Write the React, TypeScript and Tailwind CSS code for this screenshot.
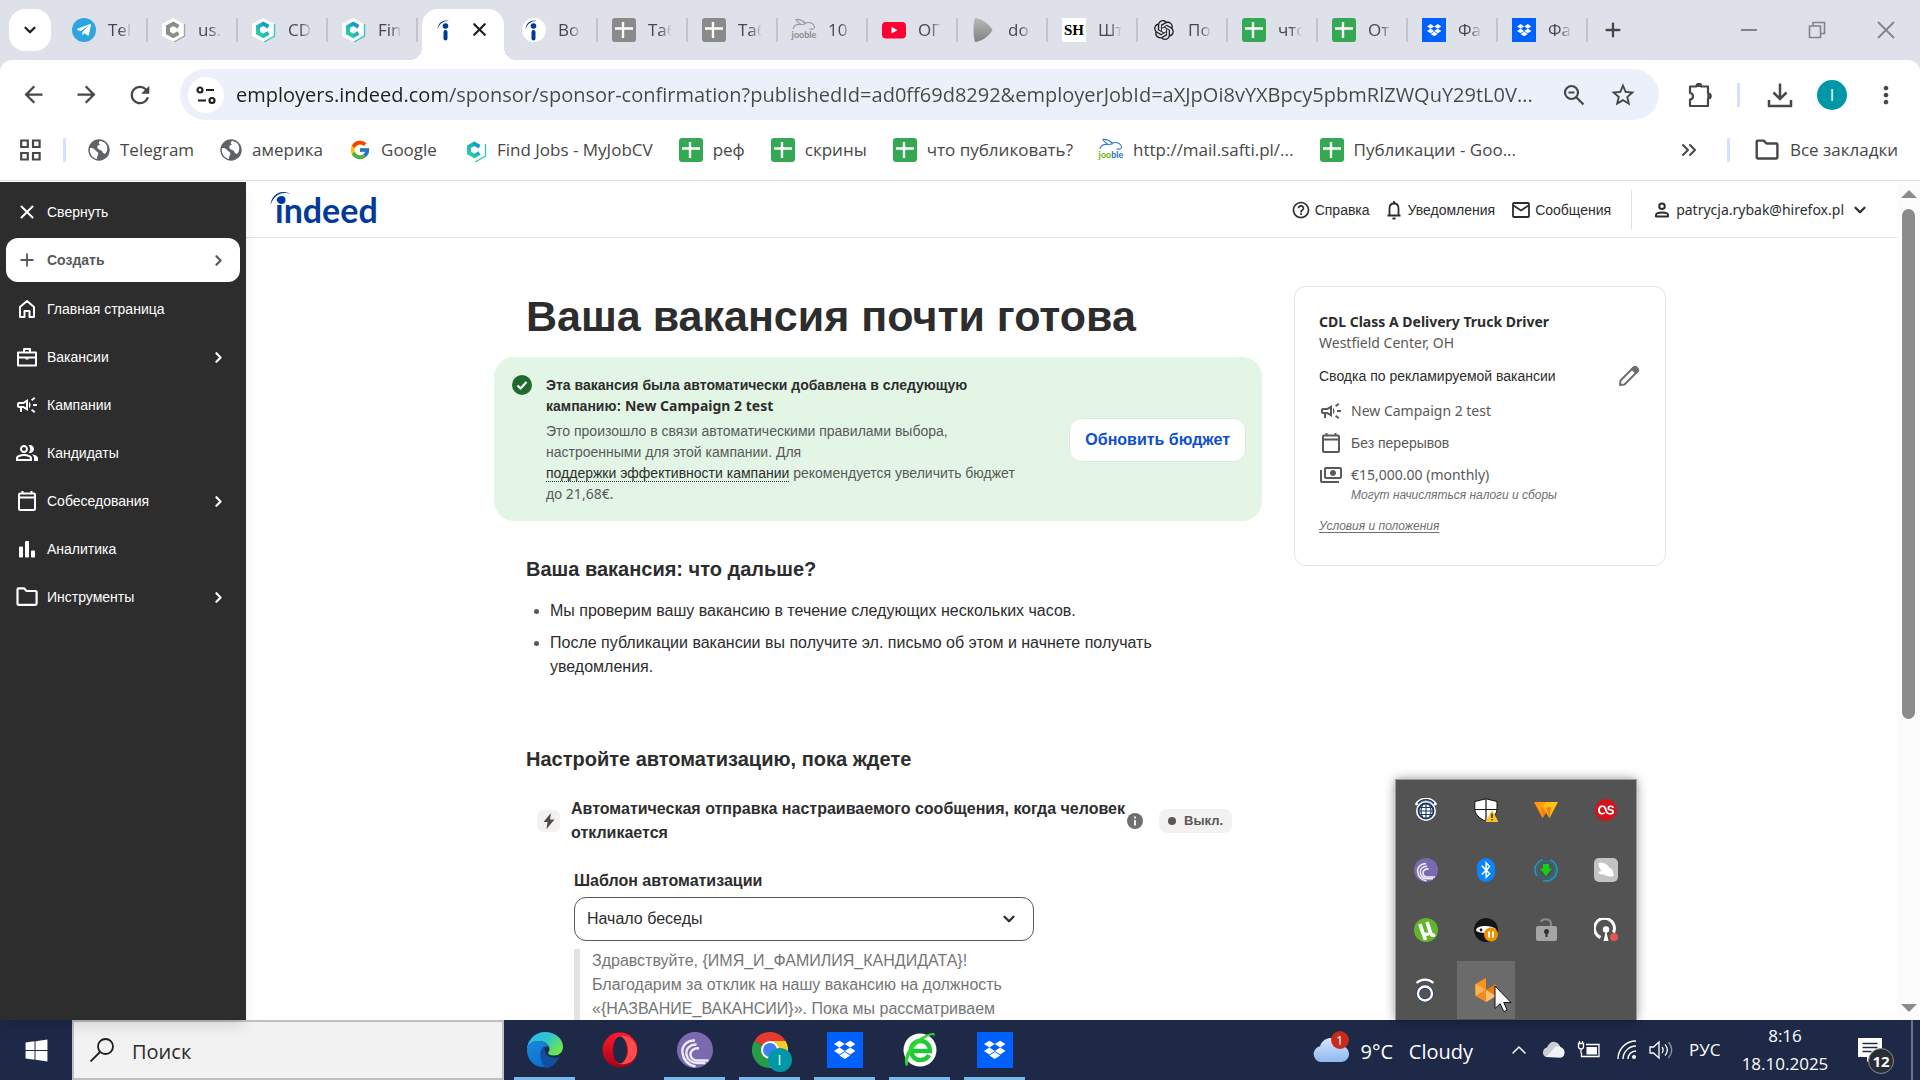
import React from 'react';
import { FcGoogle } from 'react-icons/fc';
import { FaDropbox, FaTelegramPlane, FaWindows, FaLastfm, FaBluetoothB } from 'react-icons/fa';
import { RiOpenaiFill } from 'react-icons/ri';
import {
    MdArrowBack,
    MdArrowForward,
    MdRefresh,
    MdStarBorder,
    MdMoreVert,
    MdOutlineHelpOutline,
    MdOutlineCampaign,
    MdOutlinePeopleAlt,
    MdOutlinePayments,
} from 'react-icons/md';
import { ChevronDown, ChevronRight, ChevronUp, ChevronsRight, Plus, X } from 'lucide-react';

interface IconProps {
    className?: string;
}

const SheetsIcon = ({ className = 'text-[#34a853]' }: IconProps) => (
    <svg viewBox="0 0 24 24" className={`size-6 shrink-0 ${className}`}>
        <rect width="24" height="24" rx="3" fill="currentColor" />
        <path d="M3 10.5h18M11 4v16" stroke="#fff" strokeWidth="2.4" fill="none" />
    </svg>
);

const HexIcon = ({ gray = false, plate = true }: { gray?: boolean; plate?: boolean }) => (
    <svg viewBox="0 0 24 24" className="size-6 shrink-0">
        <defs>
            <linearGradient id={gray ? 'hexGray' : 'hexTeal'} x1="0" y1="1" x2="1" y2="0">
                <stop offset="0" stopColor={gray ? '#8c8c8c' : '#2fd3a0'} />
                <stop offset="1" stopColor={gray ? '#8c8c8c' : '#128fd8'} />
            </linearGradient>
        </defs>
        {plate && <path d="M11 0l11 6v12l-10 6-12-6V6z" fill="#fff" />}
        <path
            d="M16.5 8.7L11.300 5.700 6 8.700v6.300l5.300 3 5.200-3"
            fill="none"
            stroke={gray ? 'url(#hexGray)' : 'url(#hexTeal)'}
            strokeWidth="4"
        />
        <path d="M22.500 6v12L12 24" fill="none" stroke={gray ? '#a5a5a5' : '#3ac6c0'} strokeWidth="1.400" />
    </svg>
);

const TelegramIcon = () => (
    <span className="flex size-6 shrink-0 items-center justify-center rounded-full bg-[#2ca5e0] text-white">
        <FaTelegramPlane className="mr-px size-4" />
    </span>
);

const IndeedIcon = ({ className = '' }: IconProps) => (
    <svg viewBox="0 0 24 24" className={`size-6 shrink-0 ${className}`}>
        <path d="M3.500 11C4 5 9 .5 16.500 3.500 10.500 2 6 5 3.500 11z" fill="#003a9b" />
        <circle cx="11.500" cy="8" r="2.800" fill="#003a9b" />
        <rect x="9.500" y="12" width="4" height="10.500" rx="2" fill="#003a9b" />
    </svg>
);

const JoobleIcon = ({ gray = false }: { gray?: boolean }) => (
    <span className="flex size-6 shrink-0 flex-col items-center">
        <svg viewBox="0 0 24 12" className="h-3 w-6 shrink-0">
            <path
                d="M1 11c1-4 4-5 8-4.500C7 5 5 4 4 1.500 8 1 11 3 13 5c4-1 8 0 9.500 3.500.5 2-2 3-5 2.500M9 6.500c2 0 4-.5 5-1"
                fill="none"
                stroke={gray ? '#9a9a9a' : '#2f7fc8'}
                strokeWidth="1.100"
            />
        </svg>
        <span className={`font-['Lato',sans-serif] text-[9px] leading-[10px] font-bold ${gray ? 'text-[#8c8c8c]' : 'text-[#1b6fc0]'}`}>
            <span className={gray ? '' : 'text-[#6bb400]'}>joo</span>ble
        </span>
    </span>
);

const YoutubeIcon = () => (
    <svg viewBox="0 0 24 24" className="size-6 shrink-0">
        <rect y="4" width="24" height="16.500" rx="4" fill="#ff0033" />
        <path d="M9.500 8.800l6 3.400-6 3.400z" fill="#fff" />
    </svg>
);

const PlayIcon = () => (
    <svg viewBox="0 0 24 24" className="size-6 shrink-0">
        <defs>
            <linearGradient id="play" x1="0" y1="0" x2="0" y2="1">
                <stop offset="0" stopColor="#b8b8b8" />
                <stop offset="1" stopColor="#828282" />
            </linearGradient>
        </defs>
        <path d="M3 0c5 0 14 5 17.500 12C17 19 8 24 3 24c-2-6-2-18 0-24z" fill="url(#play)" />
    </svg>
);

const DropboxIcon = ({ className = 'size-6' }: IconProps) => (
    <span className={`flex shrink-0 items-center justify-center bg-[#0061fe] text-white ${className}`}>
        <FaDropbox className="size-3/5" />
    </span>
);

const GlobeIcon = () => (
    <svg viewBox="0 0 22 22" className="size-[22px] shrink-0">
        <circle cx="11" cy="11" r="10.700" fill="#5f6368" />
        <path d="M12 2c-2 1-1 3 0 4-3 0-3 2-2 4 2 1 4 1 5 4l2 1c3-3 3-8 0-11-1-1-3-2-5-2zM2 9c3-.5 5 1 6 3 2 1 3 2 2 4-1 1-1 3-1 4C4 19 1 14 2 9z" fill="#fff" />
    </svg>
);

const FolderIcon = ({ className = 'size-6' }: IconProps) => (
    <svg viewBox="0 0 24 24" className={`shrink-0 ${className}`} fill="none" stroke="currentColor" strokeWidth="2.200" strokeLinejoin="round">
        <path d="M2.500 18.500v-14q0-1.200 1.200-1.200H9l2.600 2.700h9q1 0 1 1v11.500q0 1.300-1.200 1.300H3.700q-1.200 0-1.200-1.300z" />
    </svg>
);

const HomeIcon = () => (
    <svg viewBox="0 0 20 20" className="size-5" fill="none" stroke="currentColor" strokeWidth="2" strokeLinejoin="round">
        <path d="M3 18V8l7-6 7 6v10h-4.500v-6h-5v6z" />
    </svg>
);

const BriefcaseIcon = () => (
    <svg viewBox="0 0 22 20" className="h-5 w-[22px]" fill="none" stroke="currentColor" strokeWidth="2">
        <path d="M2 5.500h18v13H2zM8 5V2h6v3M2 10.500h18" strokeLinejoin="round" />
        <path d="M9.500 10.500h3v2h-3z" fill="currentColor" stroke="none" />
    </svg>
);

const CalendarIcon = () => (
    <svg viewBox="0 0 20 22" className="h-[22px] w-5" fill="none" stroke="currentColor" strokeWidth="2">
        <rect x="2" y="3.500" width="16" height="16.500" rx="1" />
        <path d="M2 7.500h16M5.500 1v3M14.500 1v3" />
    </svg>
);

const BarsIcon = () => (
    <svg viewBox="0 0 18 18" className="size-[18px]" fill="currentColor">
        <rect x="1" y="6.500" width="4" height="11" rx="1" />
        <rect x="7" y="1" width="4" height="16.500" rx="1" />
        <rect x="13" y="10.500" width="4" height="7" rx="1" />
    </svg>
);

const BellIcon = () => (
    <svg viewBox="0 0 14 20" className="h-5 w-[14px]" fill="none" stroke="currentColor" strokeWidth="1.800">
        <path d="M.5 15.500h13M2.500 15V8.500C2.500 5.500 4.300 3.500 7 3.500s4.500 2 4.500 5V15" />
        <path d="M7 1v2M5.500 18.500h3" />
    </svg>
);

const MailIcon = () => (
    <svg viewBox="0 0 18 16" className="h-4 w-[18px]" fill="none" stroke="currentColor" strokeWidth="1.800">
        <rect x="1" y="1" width="16" height="14" rx="1" />
        <path d="M1.500 3.500L9 8.500l7.500-5" />
    </svg>
);

const PersonIcon = () => (
    <svg viewBox="0 0 14 16" className="h-4 w-[14px]" fill="none" stroke="currentColor" strokeWidth="2">
        <circle cx="7" cy="4.200" r="2.800" />
        <path d="M1 14.500v-1.500c0-1.500 3-2.500 6-2.500s6 1 6 2.500v1.500z" strokeLinejoin="round" />
    </svg>
);

const BittorrentIcon = ({ className = 'size-6' }: IconProps) => (
    <svg viewBox="0 0 36 36" className={`shrink-0 ${className}`}>
        <circle cx="18" cy="18" r="18" fill="#7a6ab0" />
        <g fill="none" stroke="#eeeaf6" strokeWidth="2.400">
            <path d="M18 8.500C10 8 4.500 14 5.500 21c1 7 6 12 13 13.500" />
            <path d="M19.500 12.500c-6-.5-11 4-10 10 .8 5 5 8.500 11 8.500h8" />
            <path d="M22 16.500c-4.500-1-9 2-8.500 6.500.4 3 3 5.500 7 5.500h11" />
        </g>
    </svg>
);

const EdgeIcon = () => (
    <svg viewBox="0 0 36 36" className="size-9">
        <defs>
            <linearGradient id="edgeTop" x1="0" y1="0" x2="1" y2="0.600">
                <stop offset="0" stopColor="#33b5f0" />
                <stop offset="0.500" stopColor="#2cc4d4" />
                <stop offset="1" stopColor="#6ae84a" />
            </linearGradient>
            <linearGradient id="edgeLow" x1="0" y1="0" x2="0.600" y2="1">
                <stop offset="0" stopColor="#1a8ad8" />
                <stop offset="1" stopColor="#0c6fd0" />
            </linearGradient>
        </defs>
        <path d="M0 18C0 8 8 0 18 0c11 0 18 7 18 15 0 5-4 8.500-9 8.500-4 0-6-1.500-6-2.500 0-.8 1.500-1.500 1.500-4C22.500 13 18 9 12 9 6 9 1 12 0 18z" fill="url(#edgeTop)" />
        <path d="M0 18c0-6 5-9 11-9 5 0 10 2.500 11 6-2-1-5-.5-7 2.500-3 5-1 13 5 17.500C8 37 0 28 0 18z" fill="url(#edgeLow)" />
        <path d="M13.500 21c0-3 2-6 4.500-7-1 3 0 8 4 10.500 3.500 2 7.500 1.800 10.500.2C30 31 25 35.500 19 36c-3-2-6-9-5.500-15z" fill="#114f9f" />
    </svg>
);

const OperaIcon = () => (
    <svg viewBox="0 0 36 36" className="size-9">
        <defs>
            <linearGradient id="opera" x1="0" y1="0" x2="0" y2="1">
                <stop offset="0" stopColor="#ff1b2d" />
                <stop offset="1" stopColor="#a70014" />
            </linearGradient>
        </defs>
        <ellipse cx="18" cy="18" rx="17.500" ry="17.500" fill="url(#opera)" />
        <path d="M13 6c9-6 22 0 22 12s-13 18-22 12c9 3 13-5 13-12S22 3 13 6z" fill="#ff4b4b" />
        <ellipse cx="18" cy="18" rx="7" ry="13.500" fill="#1e2847" />
    </svg>
);

const ChromeIcon = () => (
    <span className="relative block size-9">
        <svg viewBox="0 0 36 36" className="size-9">
            <path d="M18 18L2.400 9A18 18 0 0 1 33.600 9z" fill="#e33b2e" />
            <path d="M18 18L2.400 9A18 18 0 0 0 18 36z" fill="#269e48" />
            <path d="M18 18L18 36A18 18 0 0 0 33.600 9H18z" fill="#fcc72b" />
            <circle cx="18" cy="18" r="9" fill="#fff" />
            <circle cx="18" cy="18" r="7" fill="#3f7ff0" />
        </svg>
        <span className="absolute -right-1 -bottom-1 flex size-6 items-center justify-center rounded-full bg-[#0097a7] font-['Open_Sans',sans-serif] text-sm text-white">
            I
        </span>
    </span>
);

const GreenBrowserIcon = () => (
    <svg viewBox="0 0 36 36" className="size-9">
        <circle cx="18" cy="18" r="16.500" fill="#fff" />
        <path d="M10 19h18c0-6-4-10-9.500-10S9 13 9 18.500 13 28 18.500 28c4 0 7-2 8.500-5" fill="none" stroke="#1fc93a" strokeWidth="4.500" />
        <path d="M4 34C-1 24 12 4 31 1c2 0 2 2 1 4 0-3-3-2-7 0C12 12 5 24 6 33z" fill="#2bdb2b" />
    </svg>
);

const tabs = [
    { icon: <TelegramIcon />, text: 'Tel' },
    { icon: <HexIcon gray />, text: 'us.' },
    { icon: <HexIcon />, text: 'CD' },
    { icon: <HexIcon />, text: 'Fin' },
    { icon: <IndeedIcon />, text: '', active: true },
    { icon: <IndeedIcon className="rounded-full bg-white" />, text: 'Во' },
    { icon: <SheetsIcon className="text-[#8a8a8a]" />, text: 'Таб' },
    { icon: <SheetsIcon className="text-[#8a8a8a]" />, text: 'Таб' },
    { icon: <JoobleIcon gray />, text: '10' },
    { icon: <YoutubeIcon />, text: 'ОГ' },
    { icon: <PlayIcon />, text: 'do' },
    {
        icon: (
            <span className="flex size-6 shrink-0 items-center justify-center bg-white font-['Liberation_Serif',serif] text-[15px] font-bold text-black">
                SH
            </span>
        ),
        text: 'Шт',
    },
    { icon: <RiOpenaiFill className="size-6 shrink-0 text-[#1f1f1f]" />, text: 'По' },
    { icon: <SheetsIcon />, text: 'что' },
    { icon: <SheetsIcon />, text: 'От' },
    { icon: <DropboxIcon />, text: 'Фа' },
    { icon: <DropboxIcon />, text: 'Фа' },
];

const bookmarks = [
    { icon: <GlobeIcon />, text: 'Telegram' },
    { icon: <GlobeIcon />, text: 'америка' },
    { icon: <FcGoogle className="size-[22px] shrink-0" />, text: 'Google' },
    { icon: <HexIcon plate={false} />, text: 'Find Jobs - MyJobCV' },
    { icon: <SheetsIcon />, text: 'реф' },
    { icon: <SheetsIcon />, text: 'скрины' },
    { icon: <SheetsIcon />, text: 'что публиковать?' },
    { icon: <JoobleIcon />, text: 'http://mail.safti.pl/...' },
    { icon: <SheetsIcon />, text: 'Публикации - Goo...' },
];

const menu = [
    { icon: <HomeIcon />, text: 'Главная страница' },
    { icon: <BriefcaseIcon />, text: 'Вакансии', more: true },
    { icon: <MdOutlineCampaign className="size-6" />, text: 'Кампании' },
    { icon: <MdOutlinePeopleAlt className="size-6" />, text: 'Кандидаты' },
    { icon: <CalendarIcon />, text: 'Собеседования', more: true },
    { icon: <BarsIcon />, text: 'Аналитика' },
    { icon: <FolderIcon />, text: 'Инструменты', more: true },
];

const Latin = ({ children }: { children: React.ReactNode }) => (
    <span className="font-['Noto_Sans',sans-serif] leading-none">{children}</span>
);

const TabStrip = () => (
    <div className="flex h-[60px] items-center bg-[#dee1e9] pl-[9px] text-[#474747]">
        <button aria-label="Поиск вкладок" className="mr-[7px] flex size-[42px] shrink-0 items-center justify-center rounded-2xl bg-white text-[#1f1f1f]">
            <ChevronDown size={18} strokeWidth={3} />
        </button>
        {tabs.map((tab, i) =>
            tab.active ? (
                <div key={i} className="relative mt-[9px] flex h-[51px] w-[90px] shrink-0 items-start px-1">
                    <div className="flex h-full w-full items-start justify-between rounded-t-2xl bg-white pt-[9px] pr-[14px] pl-3">
                        {tab.icon}
                        <button aria-label="Закрыть" className="mt-px text-[#1f1f1f]">
                            <X size={21} strokeWidth={2.5} />
                        </button>
                    </div>
                    <span className="absolute bottom-0 -left-2 size-3 bg-[radial-gradient(circle_at_top_left,transparent_12px,white_12px)]" />
                    <span className="absolute -right-2 bottom-0 size-3 bg-[radial-gradient(circle_at_top_right,transparent_12px,white_12px)]" />
                </div>
            ) : (
                <div key={i} className="flex w-[90px] shrink-0 items-center gap-3 pl-[14px]">
                    {tab.icon}
                    <span className="w-6 overflow-hidden text-[17px] leading-6 whitespace-nowrap [mask-image:linear-gradient(to_right,black_50%,transparent)]">
                        {tab.text}
                    </span>
                    <span className="ml-auto h-6 w-[2px] bg-[#c4c4c4]" />
                </div>
            ),
        )}
        <button aria-label="Новая вкладка" className="ml-[14px]">
            <Plus size={22} strokeWidth={2.5} />
        </button>
        <div className="mr-[25px] ml-auto flex items-center gap-[51px] text-[#808389]">
            <button aria-label="Свернуть окно" className="h-[2px] w-4 bg-current" />
            <button aria-label="Восстановить">
                <svg viewBox="0 0 18 18" className="size-[18px]" fill="none" stroke="currentColor" strokeWidth="1.600">
                    <path d="M1.500 5h11v11.500h-11zM5 5V1.500h11.500v11H12.500" />
                </svg>
            </button>
            <button aria-label="Закрыть окно">
                <svg viewBox="0 0 18 18" className="size-[18px]" fill="none" stroke="currentColor" strokeWidth="1.800">
                    <path d="M1 1l16 16M17 1L1 17" />
                </svg>
            </button>
        </div>
    </div>
);

const Toolbar = () => (
    <div className="rounded-t-xl bg-white text-[#474747]">
        <div className="flex items-center pt-[9px] pr-5 pl-5">
            <div className="flex w-[160px] items-center gap-[26px]">
                <button aria-label="Назад"><MdArrowBack size={27} /></button>
                <button aria-label="Вперед"><MdArrowForward size={27} /></button>
                <button aria-label="Обновить"><MdRefresh size={28} /></button>
            </div>
            <div className="flex h-[51px] min-w-0 flex-1 items-center rounded-full bg-[#ecf0fa] pr-[22px] pl-2">
                <span className="flex size-9 shrink-0 items-center justify-center rounded-full bg-white">
                    <svg viewBox="0 0 20 20" className="size-5" fill="none" stroke="#1f1f1f" strokeWidth="2.200">
                        <circle cx="4" cy="5" r="2.500" />
                        <path d="M10 5h8M2 15.500h8" />
                        <circle cx="16" cy="15.500" r="2.500" />
                    </svg>
                </span>
                <input
                    aria-label="Адрес"
                    readOnly
                    className="ml-3 min-w-0 flex-1 bg-[linear-gradient(to_right,#1f1f1f_207px,#474747_207px)] bg-clip-text text-xl text-transparent outline-none"
                    value="employers.indeed.com/sponsor/sponsor-confirmation?publishedId=ad0ff69d8292&employerJobId=aXJpOi8vYXBpcy5pbmRlZWQuY29tL0V..."
                />
                <button aria-label="Масштаб" className="mr-6 ml-3">
                    <svg viewBox="0 0 22 22" className="size-[22px]" fill="none" stroke="currentColor" strokeWidth="2.200">
                        <circle cx="8.500" cy="8.500" r="6.500" />
                        <path d="M13.500 13.500l7 7M5.500 8.500h6" />
                    </svg>
                </button>
                <button aria-label="Добавить закладку"><MdStarBorder size={28} /></button>
            </div>
            <div className="ml-7 flex items-center">
                <button aria-label="Расширения">
                    <svg viewBox="0 0 26 26" className="size-[26px]" fill="none" stroke="currentColor" strokeWidth="2.200" strokeLinejoin="round">
                        <path d="M3 4.500h6.500a2.300 2.300 0 0 1 4.600 0H21v7a2.500 2.500 0 0 1 0 5V24H3v-6.500c4-.5 4-6 0-6.500z" />
                        <path d="M10 4a2 2 0 0 1 4 0zM21.500 12a2 2 0 0 1 0 4z" fill="currentColor" />
                    </svg>
                </button>
                <span className="ml-6 h-6 w-[3px] bg-[#d3e3fd]" />
                <button aria-label="Загрузки" className="ml-[27px]">
                    <svg viewBox="0 0 26 26" className="size-[26px]" fill="none" stroke="currentColor" strokeWidth="2.500">
                        <path d="M13 1.500v15M6.500 10.500l6.500 6.500 6.500-6.500M2 18v6h22v-6" />
                    </svg>
                </button>
                <button className="ml-6 flex size-[30px] items-center justify-center rounded-full bg-[#0097a7] text-base text-white">I</button>
                <button aria-label="Меню" className="ml-[25px]"><MdMoreVert size={28} /></button>
            </div>
        </div>
        <div className="flex h-[60px] items-center pr-[22px] pl-5 text-[17px]">
            <button aria-label="Приложения">
                <svg viewBox="0 0 21 22" className="h-[22px] w-[21px]" fill="none" stroke="currentColor" strokeWidth="2.200">
                    <path d="M1.200 1.500h6.600v6.500H1.200zM13 1.500h6.600v6.500H13zM1.200 14h6.600v6.500H1.200zM13 14h6.600v6.500H13z" />
                </svg>
            </button>
            <span className="mx-[22px] h-6 w-[3px] bg-[#d3e3fd]" />
            <div className="flex items-center gap-[26px]">
                {bookmarks.map((item) => (
                    <a key={item.text} href="#" className="flex items-center gap-[10px] whitespace-nowrap">
                        {item.icon}
                        {item.text}
                    </a>
                ))}
            </div>
            <button aria-label="Другие закладки" className="mr-[2px] ml-auto"><ChevronsRight size={24} /></button>
            <span className="mx-6 h-6 w-[3px] bg-[#d3e3fd]" />
            <a href="#" className="flex items-center gap-[10px] whitespace-nowrap">
                <FolderIcon className="size-[26px]" />
                Все закладки
            </a>
        </div>
    </div>
);

const Sidebar = () => (
    <nav className="z-10 w-[246px] shrink-0 bg-[#2d2d2d] px-[6px] text-sm text-white shadow-lg">
        <button className="mt-1 flex h-[52px] items-center">
            <span className="flex w-[41px] justify-center"><X size={22} strokeWidth={2.2} /></span>
            Свернуть
        </button>
        <button className="mb-[3px] flex h-11 w-full items-center rounded-xl bg-white pr-[13px] font-bold text-[#595959]">
            <span className="flex w-[41px] justify-center"><Plus size={20} strokeWidth={2.2} /></span>
            Создать
            <ChevronRight className="ml-auto" size={17} strokeWidth={3} />
        </button>
        {menu.map((item) => (
            <a key={item.text} href="#" className="flex h-12 items-center pr-[13px]">
                <span className="flex w-[41px] justify-center">{item.icon}</span>
                {item.text}
                {item.more && <ChevronRight className="ml-auto" size={17} strokeWidth={3} />}
            </a>
        ))}
    </nav>
);

const PageHeader = () => (
    <header className="flex h-14 shrink-0 items-center border-b border-[#e4e2e0] pr-7 pl-6 text-sm text-[#2d2d2d]">
        <a href="#" className="relative flex h-10 items-center pl-[5px] font-['Lato',sans-serif] text-[34px] leading-10 font-bold text-[#003a9b]">
            <svg viewBox="0 0 22 18" className="absolute top-0 left-0 h-[18px] w-[22px]">
                <path d="M.5 15C1.500 5 10-1.500 20.500 4 11 1 4 5.500 .5 15z" fill="#003a9b" />
                <circle cx="11.500" cy="10" r="4" fill="#003a9b" />
            </svg>
            indeed
        </a>
        <div className="ml-auto flex items-center gap-[17px]">
            <a href="#" className="flex items-center gap-1"><MdOutlineHelpOutline size={20} />Справка</a>
            <a href="#" className="flex items-center gap-[7px]"><BellIcon />Уведомления</a>
            <a href="#" className="flex items-center gap-[5px]"><MailIcon />Сообщения</a>
        </div>
        <button className="ml-5 flex h-10 items-center gap-[7px] border-l border-[#e4e2e0] pl-[23px] font-['Noto_Sans',sans-serif]">
            <PersonIcon />
            patrycja.rybak@hirefox.pl
            <ChevronDown size={18} strokeWidth={3} />
        </button>
    </header>
);

const CampaignNotice = () => (
    <section className="flex items-center rounded-[20px] bg-[#e3f6e6] pt-[18px] pr-4 pb-4 pl-[18px] text-sm leading-[21px] text-[#595959]">
        <div className="flex flex-1 gap-[14px]">
            <svg viewBox="0 0 20 20" className="size-5 shrink-0">
                <circle cx="10" cy="10" r="10" fill="#1f6a2e" />
                <path d="M5.500 10.500l3 3 6-6.500" fill="none" stroke="#fff" strokeWidth="2" />
            </svg>
            <div className="max-w-[480px]">
                <h2 className="mb-1 max-w-[430px] font-bold text-[#2d2d2d]">
                    Эта вакансия была автоматически добавлена в следующую кампанию: <Latin>New Campaign 2 test</Latin>
                </h2>
                <p>
                    Это произошло в связи автоматическими правилами выбора,
                    <br />
                    настроенными для этой кампании. Для
                    <br />
                    <a href="#" className="border-b border-dotted border-[#2d2d2d] text-[#2d2d2d]">поддержки эффективности кампании</a>{' '}
                    рекомендуется увеличить бюджет
                    <br />
                    до <Latin>21,68€.</Latin>
                </p>
            </div>
        </div>
        <button className="h-11 rounded-xl border border-[#e4e2e0] bg-white px-[15px] text-base font-bold whitespace-nowrap text-[#0d4fd0]">
            Обновить бюджет
        </button>
    </section>
);

const Automation = () => (
    <section className="pl-8 text-base leading-6 text-[#2d2d2d]">
        <h2 className="mb-6 text-xl leading-7 font-bold">Настройте автоматизацию, пока ждете</h2>
        <div className="flex items-center pl-[11px]">
            <span className="mr-[11px] flex h-[22px] w-[23px] shrink-0 items-center justify-center rounded-md bg-[#f3f2f1]">
                <svg viewBox="0 0 12 16" className="h-4 w-3"><path d="M8 0L.500 9h4L3.500 16l8-9.500H7z" fill="#4b4b4b" /></svg>
            </span>
            <h3 className="w-[556px] font-bold">Автоматическая отправка настраиваемого сообщения, когда человек откликается</h3>
            <svg viewBox="0 0 16 16" className="size-4">
                <circle cx="8" cy="8" r="8" fill="#6f6f6f" />
                <path d="M8 3.500v2M8 7v5.500" stroke="#fff" strokeWidth="1.800" />
            </svg>
            <span className="ml-4 flex h-6 items-center gap-2 rounded-lg bg-[#f3f2f1] px-[9px] text-[13px] font-bold text-[#595959]">
                <span className="size-2 rounded-full bg-[#595959]" />
                Выкл.
            </span>
        </div>
        <div className="mt-6 ml-12 w-[460px]">
            <label htmlFor="template" className="mb-1 block font-bold">Шаблон автоматизации</label>
            <div className="relative">
                <select id="template" className="h-11 w-full appearance-none rounded-xl border border-[#595959] bg-white px-3">
                    <option>Начало беседы</option>
                </select>
                <ChevronDown className="pointer-events-none absolute top-[13px] right-4" size={18} strokeWidth={3} />
            </div>
            <blockquote className="mt-2 border-l-[6px] border-[#e4e2e0] pl-3 text-[#767676]">
                Здравствуйте, {'{ИМЯ_И_ФАМИЛИЯ_КАНДИДАТА}'}!
                <br />
                Благодарим за отклик на нашу вакансию на должность «{'{НАЗВАНИЕ_ВАКАНСИИ}'}». Пока мы рассматриваем
            </blockquote>
        </div>
    </section>
);

const SummaryCard = () => (
    <aside className="h-[280px] rounded-xl border border-[#e4e2e0] px-6 pt-6 text-sm leading-[21px] text-[#595959]">
        <div className="font-['Noto_Sans',sans-serif]">
            <h2 className="font-bold text-[#2d2d2d]">CDL Class A Delivery Truck Driver</h2>
            <p>Westfield Center, OH</p>
        </div>
        <div className="mt-3 mb-3 flex items-center justify-between pr-px text-[#2d2d2d]">
            Сводка по рекламируемой вакансии
            <button aria-label="Изменить" className="text-[#6f6f6f]">
                <svg viewBox="0 0 22 22" className="size-[22px]" fill="none" stroke="currentColor" strokeWidth="2" strokeLinejoin="round">
                    <path d="M2 20l.500-4.500L15.500 2.500c1-1 2-1 3 0l1 1c1 1 1 2 0 3L6.500 19.500z" />
                    <path d="M14 4l4 4 2-2.500L16.500 2z" fill="currentColor" />
                </svg>
            </button>
        </div>
        <ul className="space-y-2">
            <li className="flex h-6 items-center gap-2"><MdOutlineCampaign size={24} /><Latin>New Campaign 2 test</Latin></li>
            <li className="flex h-6 items-center gap-2"><span className="flex w-6 justify-center"><CalendarIcon /></span>Без перерывов</li>
            <li className="flex h-6 items-center gap-2"><MdOutlinePayments size={24} className="-scale-x-100" /><Latin>€15,000.00 (monthly)</Latin></li>
        </ul>
        <p className="ml-8 text-xs leading-4 italic text-[#6f6f6f]">Могут начисляться налоги и сборы</p>
        <a href="#" className="mt-[15px] inline-block text-xs leading-4 italic text-[#6f6f6f] underline underline-offset-2">Условия и положения</a>
    </aside>
);

const trayIcons = [
    <svg viewBox="0 0 24 24" className="size-6">
        <circle cx="12" cy="13" r="10" fill="#fff" />
        <path d="M2 7C7-1 17-1 22 7" fill="none" stroke="#fff" strokeWidth="3" />
        <circle cx="12" cy="13" r="7.500" fill="none" stroke="#1b3668" strokeWidth="1.800" />
        <path d="M5 13h14M12 6v14M8.500 7c-2 4-2 8 0 12M15.500 7c2 4 2 8 0 12M5.500 9.500h13M5.500 16.500h13" fill="none" stroke="#1b3668" strokeWidth="1.100" />
        <path d="M4 5.500c4-5 12-5 16 0" fill="none" stroke="#1b3668" strokeWidth="1.400" />
    </svg>,
    <svg viewBox="0 0 24 24" className="size-6">
        <path d="M12 .8L23 3.500V11c0 5-4 9-11 12.500C5 20 .8 16 .8 11V3.500z" fill="#fff" stroke="#111" />
        <path d="M12 1v22M1 11.500h22" stroke="#111" strokeWidth="1.200" />
        <path d="M18 12l6.500 12h-13z" fill="#fdc21c" />
        <path d="M18 15.500v4.500M18 21v1.500" stroke="#111" strokeWidth="1.300" />
    </svg>,
    <svg viewBox="0 0 24 24" className="size-6">
        <path d="M0 4h12l3.500 16L12 14.500 8.500 20z" fill="#ff9a0a" />
        <path d="M12 4h12l-8.500 16L9 8z" fill="#ffc20e" />
        <path d="M7 9l5 5.500L8.500 20zM12 9.500L17 9l-1.500 11z" fill="#f97b12" />
    </svg>,
    <span className="flex size-[22px] items-center justify-center rounded-full bg-[#d0141d] text-white"><FaLastfm size={16} /></span>,
    <BittorrentIcon />,
    <span className="flex h-6 w-[18px] items-center justify-center rounded-[9px] bg-[#0a84ff] text-white"><FaBluetoothB size={18} /></span>,
    <svg viewBox="0 0 24 24" className="size-6">
        <circle cx="12" cy="12" r="9" fill="none" stroke="#1d7488" strokeWidth="1.400" />
        <circle cx="12" cy="12" r="11" fill="none" stroke="#1fa0cc" strokeWidth="1.400" strokeDasharray="20 8" />
        <path d="M9 6h6v4.500h3L12 18l-6-7.500h3z" fill="#0fd117" />
    </svg>,
    <svg viewBox="0 0 24 24" className="size-6">
        <rect width="24" height="24" rx="5" fill="#c3c3c3" />
        <path d="M4.500 5c5-1 9 1 11 5 2 0 3 1.500 3.500 4l1 4c-4 1-9 0-11-2-2 1-4 0-5-2l3.500-1C5 10 4.500 7 4.500 5z" fill="#fff" />
    </svg>,
    <svg viewBox="0 0 24 24" className="size-6">
        <circle cx="12" cy="12" r="12" fill="#62b52a" />
        <path d="M6 6l2.500 8c1 3.500 5 3 6 1M13 4l4 12c.5 1.500 2.500 1.500 4 .5M9 15l2.500 7" fill="none" stroke="#fff" strokeWidth="3.600" />
    </svg>,
    <svg viewBox="0 0 24 24" className="size-6">
        <circle cx="12" cy="12" r="12" fill="#151515" />
        <path d="M2 12c1-5 15-5 20-1-2 5-19 5-20 1z" fill="#fff" />
        <circle cx="7" cy="12" r="1.400" fill="#151515" />
        <circle cx="17" cy="16.500" r="7" fill="#f29100" />
        <path d="M15 13.500v6M19 13.500v6" stroke="#fff" strokeWidth="2" />
    </svg>,
    <svg viewBox="0 0 24 24" className="size-6">
        <path d="M7 4c1-4 10-4 10 2v4" fill="none" stroke="#8c8c8c" strokeWidth="2" />
        <rect x="2" y="8" width="21" height="15" rx="2" fill="#a5a5a5" />
        <circle cx="12.500" cy="13.500" r="2.500" fill="#333" />
        <path d="M12.500 14v5" stroke="#333" strokeWidth="2" />
    </svg>,
    <svg viewBox="0 0 24 24" className="size-6">
        <path d="M6.500 19.500a10 10 0 1 1 13-5" fill="none" stroke="#fff" strokeWidth="3" />
        <circle cx="12" cy="11.500" r="3.200" fill="#fff" />
        <path d="M12 12l2.500 11h-5z" fill="#fff" />
        <circle cx="20" cy="19" r="4" fill="#e25555" />
    </svg>,
    <svg viewBox="0 0 24 24" className="size-6" fill="none">
        <circle cx="11" cy="15.500" r="7" stroke="#253a66" strokeWidth="4" />
        <circle cx="11" cy="15.500" r="7" stroke="#fff" strokeWidth="2.400" />
        <path d="M2.500 5c5-4.500 12-4.500 17 0" stroke="#fff" strokeWidth="2.200" />
    </svg>,
    <svg viewBox="0 0 24 24" className="size-6">
        <path d="M1.500 6L12 0v12L1.500 18z" fill="#f7941d" />
        <path d="M1.500 6L12 12 1.500 18z" fill="#fbb45a" />
        <path d="M1.500 18L12 12v12z" fill="#f58a1a" />
        <path d="M12 12l10-6v12l-10 6z" fill="#ef7b10" />
        <path d="M12 12l10 6-10 6z" fill="#ffc078" />
    </svg>,
];

const TrayPopup = () => (
    <div className="absolute right-[283px] bottom-[60px] z-20 grid h-[241px] w-[242px] grid-cols-4 grid-rows-4 border border-b-0 border-[#9b9b9b] bg-[#535353] shadow-[0_0_10px_rgba(0,0,0,0.4)]">
        {trayIcons.map((icon, i) => (
            <div key={i} className={`relative m-px flex items-center justify-center ${i === 13 ? 'bg-[#6b6b6b]' : ''}`}>
                {icon}
                {i === 13 && (
                    <svg viewBox="0 0 18 28" className="absolute top-6 left-[37px] h-7 w-[18px]">
                        <path d="M1 1v22.500l5.200-4.800 3.600 8 3.400-1.600-3.500-7.600H17z" fill="#fff" stroke="#111" />
                    </svg>
                )}
            </div>
        ))}
    </div>
);

const apps = [
    { name: 'Edge', icon: <EdgeIcon />, open: true },
    { name: 'Opera', icon: <OperaIcon /> },
    { name: 'BitTorrent', icon: <BittorrentIcon className="size-9" />, open: true },
    { name: 'Chrome', icon: <ChromeIcon />, open: true },
    { name: 'Dropbox', icon: <DropboxIcon className="size-9" />, open: true },
    { name: 'Browser', icon: <GreenBrowserIcon />, open: true },
    { name: 'Dropbox 2', icon: <DropboxIcon className="size-9" />, open: true },
];

const Taskbar = () => (
    <footer className="flex h-[60px] shrink-0 items-center bg-[#1e2847] text-white">
        <button aria-label="Пуск" className="flex w-[72px] justify-center"><FaWindows size={25} /></button>
        <label className="flex h-full w-[432px] items-center gap-[18px] border-2 border-[#c0c0c0] bg-[#f2f2f2] pl-4 text-[#1f1f1f]">
            <svg viewBox="0 0 24 24" className="size-6 shrink-0" fill="none" stroke="currentColor" strokeWidth="1.800">
                <circle cx="15.500" cy="8.500" r="7.500" />
                <path d="M10 14L.500 23.500" />
            </svg>
            <input placeholder="Поиск" className="min-w-0 flex-1 pt-[3px] text-xl outline-none placeholder:text-[#2b2b2b]" />
        </label>
        <div className="ml-[3px] flex h-full">
            {apps.map((app) => (
                <button
                    key={app.name}
                    aria-label={app.name}
                    className="flex h-full w-[75px] flex-col items-center justify-end"
                >
                    <span className="mb-[9px]">{app.icon}</span>
                    <span className={`h-[3px] w-[61px] ${app.open ? 'bg-[#76b9ed]' : ''}`} />
                </button>
            ))}
        </div>
        <div className="ml-auto flex h-full items-center">
            <button className="flex items-center text-xl whitespace-nowrap">
                <span className="relative mr-3">
                    <svg viewBox="0 0 36 24" className="h-6 w-9">
                        <defs>
                            <linearGradient id="cloud" x1="0" y1="0" x2="0" y2="1">
                                <stop offset="0" stopColor="#d6e6fb" />
                                <stop offset="1" stopColor="#8db8f2" />
                            </linearGradient>
                        </defs>
                        <path d="M8 24a8 8 0 0 1-1-15.800C9 2 14 0 18 0c6 0 9 4 10 8 5 0 8 4 8 8s-3 8-8 8z" fill="url(#cloud)" />
                    </svg>
                    <span className="absolute -top-[7px] right-0 flex size-[18px] items-center justify-center rounded-full bg-[#c62b1c] text-[13px]">1</span>
                </span>
                <span className="pt-[3px]">9°C&nbsp;&nbsp; Cloudy</span>
            </button>
            <button aria-label="Скрытые значки" className="ml-[34px]"><ChevronUp size={24} strokeWidth={1.5} /></button>
            <svg viewBox="0 0 24 18" className="ml-[10px] h-[18px] w-6">
                <path d="M5 16a5 5 0 0 1 1-9.500C8 2 11 0 14 1c4 1 5 4 5.500 6 5 1 5 9 0 9.500z" fill="#c9cdd4" />
                <path d="M5 16L15 5c5 0 9 3 8.500 7-.5 3-2 4.500-4 4.500z" fill="#f1f2f4" />
            </svg>
            <svg viewBox="0 0 24 20" className="ml-3 h-5 w-6" fill="none" stroke="#fff" strokeWidth="1.300">
                <path d="M1.500 3.500v3q0 2.500 2.500 2.500t2.500-2.500v-3zM2.500 1v2M5.500 1v2M4 9v4" />
                <path d="M9 4.500h13v12H4.500V13" />
                <rect x="9.500" y="7" width="10.500" height="7.500" fill="#fff" stroke="none" />
            </svg>
            <svg viewBox="0 0 20 20" className="ml-4 size-5" fill="none" stroke="#fff" strokeWidth="1.400">
                <path d="M1 19C1 9 9 1 19 1M6 19C6 12 12 6 19 6M11 19c0-4.500 3.500-8 8-8" />
                <circle cx="17" cy="17" r="2" fill="#fff" stroke="none" />
            </svg>
            <svg viewBox="0 0 24 20" className="ml-3 h-5 w-6" fill="none" stroke="#fff" strokeWidth="1.300">
                <path d="M1 7h3.500L10 2v16l-5.500-5H1zM13 7c1.500 2 1.500 4 0 6M16 4.500c3 3.500 3 7.500 0 11" />
                <path d="M19.500 2c4 5 4 11 0 16" opacity=".5" />
            </svg>
            <span className="ml-4 w-[34px] text-[17px]">РУС</span>
            <button className="ml-3 w-[100px] text-center text-[17px] leading-7">
                8:16
                <br />
                18.10.2025
            </button>
            <button aria-label="Уведомления" className="relative mr-[29px] ml-[23px]">
                <svg viewBox="0 0 24 24" className="size-6">
                    <path d="M0 0h24v19H14l-5 5v-5H0z" fill="#fff" />
                    <path d="M4.500 5.500h15M4.500 9.500h15M4.500 13.500h9" stroke="#1e2847" strokeWidth="1.300" />
                </svg>
                <span className="absolute -right-3 -bottom-3 flex size-[26px] items-center justify-center rounded-full border border-[#8a8f9c] bg-[#2a2d33] text-[15px] font-bold">
                    12
                </span>
            </button>
            <span className="mr-[7px] h-full w-[2px] bg-[#6d7489]" />
        </div>
    </footer>
);

const App: React.FC = () => {
    return (
        <div className="relative flex h-screen flex-col overflow-hidden bg-white font-['Open_Sans',sans-serif]">
            <TabStrip />
            <div className="bg-[#dee1e9]"><Toolbar /></div>
            <div className="flex min-h-0 flex-1 border-t border-[#dcdfe3] pt-px font-['Liberation_Sans',Arial,sans-serif]">
                <Sidebar />
                <div className="flex min-w-0 flex-1 flex-col">
                    <PageHeader />
                    <main className="min-h-0 flex-1 overflow-hidden pl-[17px]">
                        <div className="mx-auto grid max-w-[1172px] grid-cols-[768fr_372fr] items-start gap-8 pt-12">
                            <div className="min-w-0">
                                <h1 className="mb-[11px] pl-8 text-[43px] leading-[60px] font-bold whitespace-nowrap text-[#2d2d2d]">
                                    Ваша вакансия почти готова
                                </h1>
                                <CampaignNotice />
                                <section className="mt-[34px] mb-[66px] pl-8 text-base leading-6 text-[#2d2d2d]">
                                    <h2 className="mb-4 text-xl leading-7 font-bold">Ваша вакансия: что дальше?</h2>
                                    <ul className="max-w-[640px] list-disc space-y-2 pl-6 marker:text-[#595959]">
                                        <li>Мы проверим вашу вакансию в течение следующих нескольких часов.</li>
                                        <li>После публикации вакансии вы получите эл. письмо об этом и начнете получать уведомления.</li>
                                    </ul>
                                </section>
                                <Automation />
                            </div>
                            <SummaryCard />
                        </div>
                    </main>
                </div>
                <div className="flex w-[23px] shrink-0 flex-col items-center bg-[#fcfcfc] py-2">
                    <span className="border-x-8 border-b-8 border-x-transparent border-b-[#8b8b8b]" />
                    <span className="mt-[11px] h-[510px] w-[13px] rounded-full bg-[#8b8b8b]" />
                    <span className="mt-auto border-x-8 border-t-8 border-x-transparent border-t-[#8b8b8b]" />
                </div>
            </div>
            <TrayPopup />
            <Taskbar />
        </div>
    );
};

export default App;
